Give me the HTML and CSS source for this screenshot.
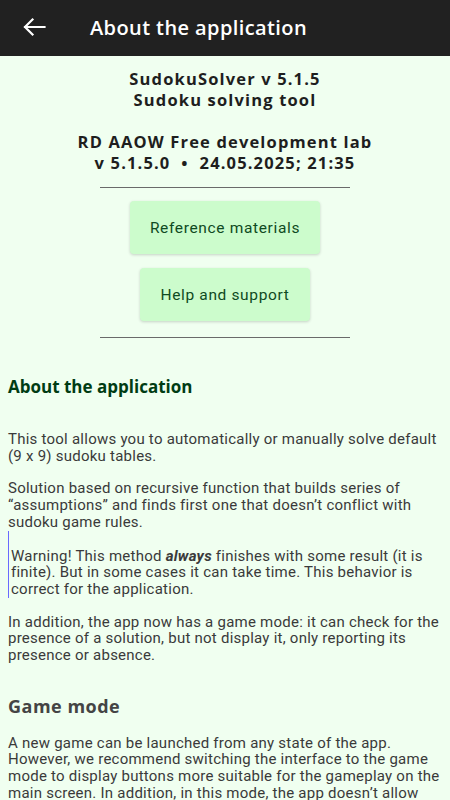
FILE: index.html
```html
<!DOCTYPE html>
<html lang="en">
<head>
<meta charset="utf-8">
<title>About the application</title>
<link rel="stylesheet" href="styles.css">
</head>
<body>
<header class="appbar">
  <svg class="back" width="24" height="20" viewBox="0 0 24 20"><path d="M22.5 10H3M10.5 2.5L3 10l7.5 7.5" fill="none" stroke="#fff" stroke-width="2.2" stroke-linecap="square"/></svg>
  <h1 class="appbar-title">About the application</h1>
</header>
<main class="content">
  <div class="intro">
    <div>SudokuSolver v 5.1.5</div>
    <div>Sudoku solving tool</div>
    <div class="blank">&nbsp;</div>
    <div>RD AAOW Free development lab</div>
    <div>v 5.1.5.0 &nbsp;•&nbsp; 24.05.2025; 21:35</div>
  </div>
  <hr class="rule">
  <div class="buttons">
    <button class="btn">Reference materials</button>
    <button class="btn">Help and support</button>
  </div>
  <hr class="rule rule-bottom">
  <h2 class="h-about">About the application</h2>
  <p class="first">This tool allows you to automatically or manually solve default (9 x 9) sudoku tables.</p>
  <p>Solution based on recursive function that builds series of “assumptions” and finds first one that doesn’t conflict with sudoku game rules.</p>
  <blockquote class="note">Warning! This method <b><i>always</i></b> finishes with some result (it is finite). But in some cases it can take time. This behavior is correct for the application.</blockquote>
  <p>In addition, the app now has a game mode: it can check for the presence of a solution, but not display it, only reporting its presence or absence.</p>
  <h2 class="h-game">Game mode</h2>
  <p class="first">A new game can be launched from any state of the app. However, we recommend switching the interface to the game mode to display buttons more suitable for the gameplay on the main screen. In addition, in this mode, the app doesn’t allow you to solve the sudoku automatically.</p>
</main>
</body>
</html>
```

FILE: styles.css
```css
html, body {
  margin: 0;
  padding: 0;
  background: #f0fff0;
  font-family: Roboto, "Noto Sans", sans-serif;
  overflow: hidden;
}
.appbar {
  height: 56px;
  background: #212121;
  display: flex;
  align-items: center;
  padding-left: 22px;
}
.back {
  display: block;
  margin-top: -2px;
}
.appbar-title {
  margin: -2px 0 0 44px;
  color: #fff;
  font-family: "Open Sans", Roboto, sans-serif;
  font-size: 20px;
  font-weight: 600;
  letter-spacing: 0.4px;
}
.content {
  padding: 12px 8px 0;
}
.intro {
  text-align: center;
  font-family: "Open Sans", Roboto, sans-serif;
  font-weight: bold;
  font-size: 16.5px;
  line-height: 21px;
  letter-spacing: 1.15px;
  color: #1e1e1e;
}
.rule {
  width: 250px;
  margin: 14px auto 0;
  border: 0;
  border-top: 1px solid #6a6a6a;
  height: 0;
}
.buttons {
  display: flex;
  flex-direction: column;
  align-items: center;
  gap: 14px;
  margin-top: 13px;
}
.btn {
  font-family: Roboto, "Noto Sans", sans-serif;
  font-size: 15.5px;
  letter-spacing: 0.65px;
  color: #0f4a22;
  background: #ccfccc;
  border: 0;
  border-radius: 4px;
  height: 53px;
  padding: 0 20px;
  box-shadow: 0 1px 3px rgba(0,0,0,0.18);
}
.rule-bottom {
  margin-top: 16px;
}
h2 {
  font-family: "Open Sans", Roboto, sans-serif;
  font-weight: bold;
  margin: 0;
  line-height: 22px;
}
.h-about {
  font-size: 17px;
  letter-spacing: 0;
  color: #003c14;
  margin-top: 38px;
}
.h-game {
  font-size: 18px;
  letter-spacing: 0.5px;
  color: #444;
  margin-top: 31px;
}
p, .note {
  font-size: 15px;
  line-height: 16.7px;
  letter-spacing: 0.24px;
  color: #3a3a3a;
  margin: 16px 0 0;
}
p.first {
  margin-top: 33px;
}
.h-game + p.first {
  margin-top: 18px;
}
.note {
  border-left: 1px solid #6a6aff;
  padding: 17px 0 0 2px;
  margin: 0;
}
```
